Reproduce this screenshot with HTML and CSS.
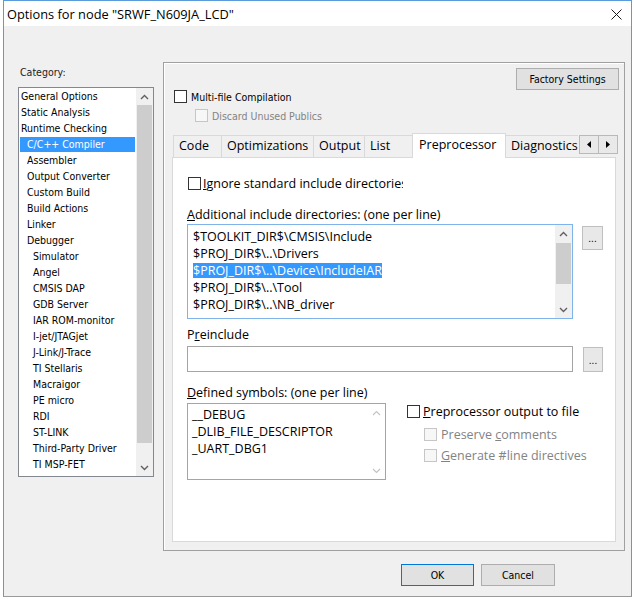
FILE: index.html
```html
<!DOCTYPE html>
<html>
<head>
<meta charset="utf-8">
<link rel="stylesheet" href="styles.css">
</head>
<body>
<div class="window">
  <div class="titlebar">
    <span class="title">Options for node "SRWF_N609JA_LCD"</span>
    <svg class="close" width="11" height="11" viewBox="0 0 11 11"><path d="M0.5 0.5 L10.5 10.5 M10.5 0.5 L0.5 10.5" stroke="#1a1a1a" stroke-width="1" fill="none"/></svg>
  </div>
  <div class="dlg">
    <div class="main">
      <div class="left">
        <div class="cat-label">Category:</div>
        <div class="catlist">
          <div class="items">
            <div class="it l0">General Options</div>
            <div class="it l0">Static Analysis</div>
            <div class="it l0">Runtime Checking</div>
            <div class="it l1 sel">C/C++ Compiler</div>
            <div class="it l1">Assembler</div>
            <div class="it l1">Output Converter</div>
            <div class="it l1">Custom Build</div>
            <div class="it l1">Build Actions</div>
            <div class="it l1">Linker</div>
            <div class="it l1">Debugger</div>
            <div class="it l2">Simulator</div>
            <div class="it l2">Angel</div>
            <div class="it l2">CMSIS DAP</div>
            <div class="it l2">GDB Server</div>
            <div class="it l2">IAR ROM-monitor</div>
            <div class="it l2">I-jet/JTAGjet</div>
            <div class="it l2">J-Link/J-Trace</div>
            <div class="it l2">TI Stellaris</div>
            <div class="it l2">Macraigor</div>
            <div class="it l2">PE micro</div>
            <div class="it l2">RDI</div>
            <div class="it l2">ST-LINK</div>
            <div class="it l2">Third-Party Driver</div>
            <div class="it l2">TI MSP-FET</div>
          </div>
          <div class="vscroll cat-scroll">
            <div class="sb-btn"><svg width="9" height="6" viewBox="0 0 9 6"><path d="M1 5 L4.5 1.5 L8 5" stroke="#606060" stroke-width="1.4" fill="none"/></svg></div>
            <div class="sb-track"><div class="sb-thumb cat-thumb"></div></div>
            <div class="sb-btn"><svg width="9" height="6" viewBox="0 0 9 6"><path d="M1 1 L4.5 4.5 L8 1" stroke="#606060" stroke-width="1.4" fill="none"/></svg></div>
          </div>
        </div>
      </div>
      <div class="group">
        <div class="factory-row"><div class="btn factory">Factory Settings</div></div>
        <div class="chk multi"><span class="box"></span><span class="lbl">Multi-file Compilation</span></div>
        <div class="chk discard dis"><span class="box"></span><span class="lbl">Discard Unused Publics</span></div>
        <div class="tabstrip">
          <div class="tabs">
            <div class="tab t-code">Code</div>
            <div class="tab t-opt">Optimizations</div>
            <div class="tab t-out">Output</div>
            <div class="tab t-list">List</div>
            <div class="tab t-pre active">Preprocessor</div>
            <div class="tab t-diag">Diagnostics</div>
          </div>
          <div class="tab-arrows">
            <div class="arr"><svg width="4" height="7" viewBox="0 0 4 7"><path d="M4 0 L0 3.5 L4 7 Z" fill="#000"/></svg></div>
            <div class="arr"><svg width="4" height="7" viewBox="0 0 4 7"><path d="M0 0 L4 3.5 L0 7 Z" fill="#000"/></svg></div>
          </div>
        </div>
        <div class="panel">
          <div class="pchk ignore"><span class="box"></span><span class="lbl clip"><u>I</u>gnore standard include directories</span></div>
          <div class="plabel add-label"><u>A</u>dditional include directories: (one per line)</div>
          <div class="row inc-row">
            <div class="tbox inc">
              <div class="lines">
                <div class="ln">$TOOLKIT_DIR$\CMSIS\Include</div>
                <div class="ln">$PROJ_DIR$\..\Drivers</div>
                <div class="ln"><span class="hl">$PROJ_DIR$\..\Device\IncludeIAR</span></div>
                <div class="ln">$PROJ_DIR$\..\Tool</div>
                <div class="ln">$PROJ_DIR$\..\NB_driver</div>
              </div>
              <div class="vscroll inc-scroll">
                <div class="sb-btn"><svg width="9" height="6" viewBox="0 0 9 6"><path d="M1 5 L4.5 1.5 L8 5" stroke="#606060" stroke-width="1.4" fill="none"/></svg></div>
                <div class="sb-track"><div class="sb-thumb inc-thumb"></div></div>
                <div class="sb-btn"><svg width="9" height="6" viewBox="0 0 9 6"><path d="M1 1 L4.5 4.5 L8 1" stroke="#606060" stroke-width="1.4" fill="none"/></svg></div>
              </div>
            </div>
            <div class="btn dots dots1">...</div>
          </div>
          <div class="plabel pre-label">P<u>r</u>einclude</div>
          <div class="row pre-row">
            <div class="tbox preinc"></div>
            <div class="btn dots dots2">...</div>
          </div>
          <div class="plabel def-label"><u>D</u>efined symbols: (one per line)</div>
          <div class="row def-row">
            <div class="tbox defs">
              <div class="lines">
                <div class="ln">__DEBUG</div>
                <div class="ln">_DLIB_FILE_DESCRIPTOR</div>
                <div class="ln">_UART_DBG1</div>
              </div>
              <div class="vscroll def-scroll">
                <div class="sb-btn"><svg width="9" height="6" viewBox="0 0 9 6"><path d="M1 5 L4.5 1.5 L8 5" stroke="#c4c4c4" stroke-width="1.2" fill="none"/></svg></div>
                <div class="sb-track"></div>
                <div class="sb-btn"><svg width="9" height="6" viewBox="0 0 9 6"><path d="M1 1 L4.5 4.5 L8 1" stroke="#c4c4c4" stroke-width="1.2" fill="none"/></svg></div>
              </div>
            </div>
            <div class="pp-col">
              <div class="pchk ppout"><span class="box"></span><span class="lbl"><u>P</u>reprocessor output to file</span></div>
              <div class="pchk dis preserve"><span class="box"></span><span class="lbl">Preserve <u>c</u>omments</span></div>
              <div class="pchk dis gen"><span class="box"></span><span class="lbl"><u>G</u>enerate #line directives</span></div>
            </div>
          </div>
        </div>
      </div>
    </div>
    <div class="buttons">
      <div class="btn ok">OK</div>
      <div class="btn cancel">Cancel</div>
    </div>
  </div>
</div>
</body>
</html>
```
FILE: styles.css
```css
* { box-sizing: border-box; }
html, body { margin: 0; padding: 0; }
body {
  width: 634px;
  height: 599px;
  overflow: hidden;
  background: #ffffff;
  font-family: "DejaVu Sans Condensed", "Liberation Sans", Arial, sans-serif;
  font-size: 10.5px;
  color: #000;
}
.window {
  margin-left: 3px;
  width: 629px;
  height: 597px;
  border: 1px solid #5a9bdc;
  border-bottom-color: #9a9a9a;
  background: #f0f0f0;
  display: flex;
  flex-direction: column;
}
.titlebar {
  height: 25px;
  flex: none;
  background: #fff;
  display: flex;
  align-items: center;
  justify-content: space-between;
  padding: 0 9px 0 3px;
}
.title {
  font-family: "Open Sans", sans-serif;
  font-size: 12.8px;
  color: #000;
}
.close { display: block; margin-top: 1px; }

.dlg { flex: 1; display: flex; flex-direction: column; }
.main { display: flex; padding-top: 36px; }
.left { margin-left: 14px; width: 136px; }
.cat-label {
  margin-top: 4px;
  padding-left: 2px;
  line-height: 13px;
  height: 13px;
  color: #222;
}
.catlist {
  margin-top: 8px;
  height: 390px;
  border: 1px solid #828790;
  background: #fff;
  display: flex;
}
.items { flex: 1; padding-top: 0; }
.it {
  height: 16px;
  line-height: 16px;
  white-space: nowrap;
  color: #000;
}
.it.l0 { padding-left: 2px; }
.it.l1 { padding-left: 8px; }
.it.l2 { padding-left: 14px; }
.it.sel {
  margin: 1px 1px 0 1px;
  height: 15px;
  line-height: 14px;
  padding-left: 7px;
  background: #3399ff;
  color: #fff;
}

.vscroll {
  width: 17px;
  flex: none;
  background: #f0f0f0;
  display: flex;
  flex-direction: column;
}
.sb-btn {
  height: 17px;
  flex: none;
  display: flex;
  align-items: center;
  justify-content: center;
}
.sb-track { flex: 1; position: relative; }
.sb-thumb { background: #cdcdcd; margin: 0 1px; }
.cat-thumb { margin-top: 0; height: 338px; }
.inc-thumb { margin-top: 1px; height: 41px; }

.group {
  margin-left: 9px;
  width: 462px;
  height: 489px;
  border: 1px solid #a0a0a0;
  box-shadow: inset 1px 1px 0 #fff;
}
.factory-row { display: flex; justify-content: flex-end; padding: 5px 5px 0 0; }
.btn {
  background: #e1e1e1;
  border: 1px solid #adadad;
  display: flex;
  align-items: center;
  justify-content: center;
  color: #000;
}
.factory { width: 103px; height: 22px; }

.chk { display: flex; align-items: center; height: 13px; white-space: nowrap; }
.box {
  width: 13px;
  height: 13px;
  flex: none;
  border: 1px solid #333;
  background: #fff;
}
.chk .lbl { margin-left: 4px; }
.multi { margin-left: 10px; }
.discard { margin-left: 31px; margin-top: 6px; }
.dis .box { border-color: #c6c6c6; background: #f7f7f7; }
.dis .lbl { color: #838383; }

.tabstrip {
  margin-top: 11px;
  margin-left: 9px;
  height: 25px;
  display: flex;
  position: relative;
  z-index: 1;
  font-family: "Open Sans", sans-serif;
  font-size: 12.5px;
}
.tabs {
  width: 405px;
  height: 25px;
  overflow: hidden;
  display: flex;
  align-items: flex-start;
}
.tab {
  flex: none;
  height: 22px;
  margin-top: 2px;
  margin-right: -1px;
  border: 1px solid #d9d9d9;
  border-bottom: none;
  background: #f0f0f0;
  padding-left: 5px;
  line-height: 20px;
  white-space: nowrap;
}
.t-code { width: 49px; }
.t-opt { width: 93px; }
.t-out { width: 52px; }
.t-list { width: 49px; }
.t-pre { width: 94px; }
.t-diag { width: 90px; }
.tab.active {
  height: 25px;
  margin-top: 0;
  background: #fff;
  position: relative;
  z-index: 2;
  line-height: 22px;
  padding-left: 6px;
}
.tab-arrows { display: flex; margin-left: 1px; margin-top: 2px; }
.arr {
  width: 20px;
  height: 19px;
  margin-right: -1px;
  border: 1px solid #b9b9b9;
  background: #e9e9e9;
  display: flex;
  align-items: center;
  justify-content: center;
}

.panel {
  margin-top: -1px;
  margin-left: 8px;
  width: 444px;
  height: 385px;
  border: 1px solid #d9d9d9;
  background: #fff;
  font-family: "Open Sans", sans-serif;
  font-size: 12.5px;
}
.pchk { display: flex; align-items: center; height: 13px; white-space: nowrap; }
.pchk .lbl { margin-left: 3px; }
.ignore { margin-left: 15px; margin-top: 19px; }
.clip { width: 200px; overflow: hidden; margin-left: 2px !important; }
.plabel { margin-left: 14px; height: 16px; line-height: 16px; white-space: nowrap; }
.add-label { margin-top: 17px; }
.row { display: flex; margin-left: 14px; align-items: flex-start; }
.tbox {
  border: 1px solid #a5a5a5;
  background: #fff;
  display: flex;
}
.inc-row { margin-top: 1px; }
.inc {
  width: 386px;
  height: 95px;
  border-color: #7eb4ea;
}
.lines { flex: 1; padding: 3px 0 0 5px; overflow: hidden; }
.ln { height: 17px; line-height: 17px; white-space: nowrap; }
.hl {
  background: #3399ff;
  color: #fff;
  display: inline-block;
  height: 15px;
  line-height: 15px;
}
.dots {
  font-family: "Liberation Sans", Arial, sans-serif;
  font-size: 10px;
  align-items: flex-end;
  padding-bottom: 5px;
  line-height: 10px;
  border-color: #bfbfbf;
  background: #e8e8e8;
}
.dots1 { width: 21px; height: 24px; margin-left: 9px; margin-top: 2px; }
.pre-label { margin-top: 8px; }
.pre-row { margin-top: 3px; }
.preinc { width: 386px; height: 26px; }
.dots2 { width: 20px; height: 25px; margin-left: 10px; margin-top: 1px; }
.def-label { margin-top: 13px; }
.def-row { margin-top: 2px; }
.defs { width: 199px; height: 77px; }
.defs .lines { padding: 2px 0 0 4px; }
.def-scroll { background: #fff; }
.pp-col { margin-left: 21px; padding-top: 2px; }
.ppout .lbl { margin-left: 3px; }
.preserve { margin-left: 17px; margin-top: 10px; }
.gen { margin-left: 17px; margin-top: 8px; }
.preserve .lbl, .gen .lbl { margin-left: 4px; }

.buttons {
  display: flex;
  justify-content: flex-end;
  gap: 7px;
  margin-top: 13px;
  padding-right: 76px;
}
.ok, .cancel { height: 22px; }
.ok { width: 73px; border-color: #0078d7; }
.cancel { width: 74px; }
```
